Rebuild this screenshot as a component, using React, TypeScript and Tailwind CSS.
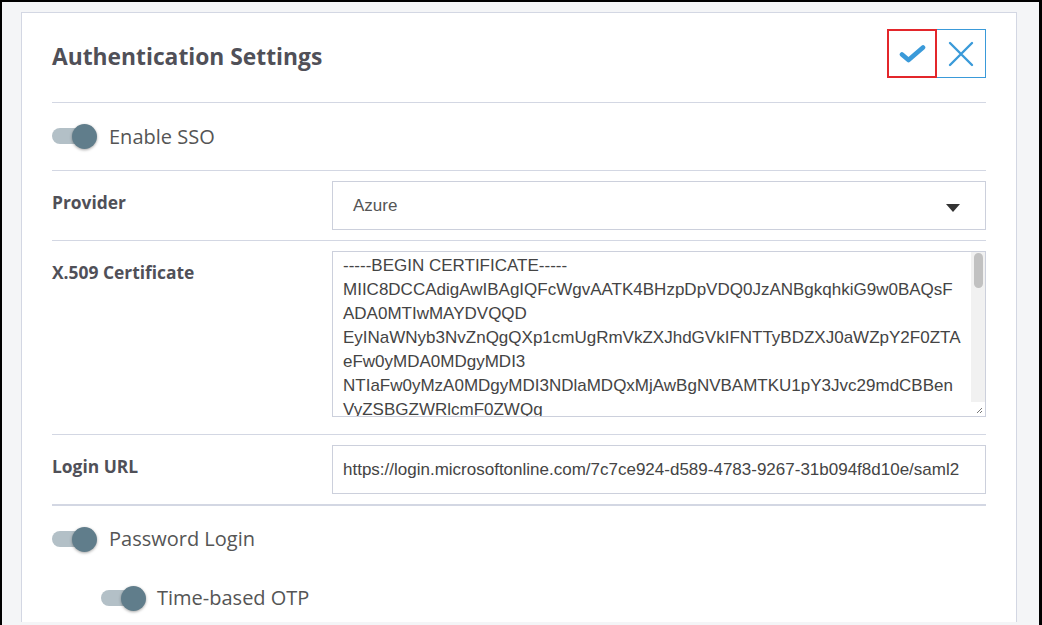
import React from "react";

const certLines = [
  "-----BEGIN CERTIFICATE-----",
  "MIIC8DCCAdigAwIBAgIQFcWgvAATK4BHzpDpVDQ0JzANBgkqhkiG9w0BAQsF",
  "ADA0MTIwMAYDVQQD",
  "EyINaWNyb3NvZnQgQXp1cmUgRmVkZXJhdGVkIFNTTyBDZXJ0aWZpY2F0ZTA",
  "eFw0yMDA0MDgyMDI3",
  "NTIaFw0yMzA0MDgyMDI3NDlaMDQxMjAwBgNVBAMTKU1pY3Jvc29mdCBBen",
  "VyZSBGZWRlcmF0ZWQg",
];

const Toggle = () => (
  <div className="relative h-[25px] w-[46px] shrink-0">
    <div className="absolute left-0 top-[4px] h-[16px] w-[38px] rounded-full bg-[#b3c0c7]" />
    <div className="absolute left-[20px] top-0 h-[25px] w-[25px] rounded-full bg-[#607d8b] shadow-[0_1px_3px_rgba(0,0,0,0.35)]" />
  </div>
);

const Label = ({ children }: { children: React.ReactNode }) => (
  <div className="w-[280px] shrink-0 pt-[9px] text-[17.4px] font-bold leading-6 text-[#505058]">
    {children}
  </div>
);

export default function App() {
  return (
    <div className="h-[625px] w-[1042px] overflow-hidden border-l-2 border-r-[3px] border-t-2 border-black bg-[#f4f5f7] pl-[19px] pt-[10px] font-['Open_Sans',sans-serif]">
      <div className="h-[610px] w-[996px] overflow-hidden border border-b-0 border-[#d3d7e3] bg-white px-[30px]">
        {/* header */}
        <div className="flex items-center justify-between border-b border-[#d3d7e3] pb-6 pt-4">
          <h1 className="mt-[8px] text-[22.8px] font-bold text-[#505058]">Authentication Settings</h1>
          <div className="flex">
            <button className="flex h-[49px] w-[50px] items-center justify-center border-2 border-[#e3262b]">
              <svg width="27" height="18" viewBox="0 0 27 18">
                <polyline
                  points="3,9.5 9.5,15 24,2.5"
                  fill="none"
                  stroke="#3a9ad9"
                  strokeWidth="4.6"
                  strokeLinecap="round"
                  strokeLinejoin="round"
                />
              </svg>
            </button>
            <button className="flex h-[49px] w-[49px] items-center justify-center border border-l-0 border-[#3a9ad9]">
              <svg width="26" height="26" viewBox="0 0 26 26">
                <path d="M2 2L24 24M24 2L2 24" stroke="#3a9ad9" strokeWidth="2.4" strokeLinecap="round" />
              </svg>
            </button>
          </div>
        </div>

        {/* enable sso */}
        <div className="flex h-[68px] items-center gap-[11px] border-b border-[#d3d7e3]">
          <Toggle />
          <span className="text-[20px] text-[#555]">Enable SSO</span>
        </div>

        {/* provider */}
        <div className="flex border-b border-[#d3d7e3] pb-[10px] pt-[10px]">
          <Label>Provider</Label>
          <div className="flex h-[49px] flex-1 items-center justify-between border border-[#ccd0dc] pl-5 pr-[25px] font-['Liberation_Sans',sans-serif] text-[17px] text-[#555]">
            <span>Azure</span>
            <svg className="mt-[4px]" width="14" height="8" viewBox="0 0 14 8">
              <path d="M0 0H14L7 8Z" fill="#333" />
            </svg>
          </div>
        </div>

        {/* certificate */}
        <div className="flex border-b border-[#d3d7e3] pb-[17px] pt-[10px]">
          <Label>X.509 Certificate</Label>
          <div className="relative flex h-[166px] flex-1 overflow-hidden border border-[#ccd0dc]">
            <div className="flex-1 overflow-hidden pl-[10px] pt-[2px] font-['Liberation_Sans',sans-serif] text-[17px] leading-6 text-[#444]">
              {certLines.map((l, i) => (
                <div key={i} className="whitespace-nowrap">
                  {l}
                </div>
              ))}
            </div>
            <div className="flex w-[14px] shrink-0 flex-col bg-[#f1f1f1]">
              <div className="mx-auto mt-px h-[35px] w-[9px] rounded-full bg-[#c1c1c1]" />
              <div className="flex-1" />
              <div className="relative h-[14px] bg-white">
                <svg className="absolute bottom-[2px] right-[2px]" width="7" height="7" viewBox="0 0 7 7">
                  <path d="M6 1L1 6M6 4L4 6" stroke="#777" strokeWidth="1" />
                </svg>
              </div>
            </div>
          </div>
        </div>

        {/* login url */}
        <div className="flex border-b-2 border-[#d3d7e3] pb-[10px] pt-[10px]">
          <Label>Login URL</Label>
          <div className="flex h-[49px] flex-1 items-center border border-[#ccd0dc] pl-[10px] font-['Liberation_Sans',sans-serif] text-[17px] text-[#444]">
            https://login.microsoftonline.com/7c7ce924-d589-4783-9267-31b094f8d10e/saml2
          </div>
        </div>

        {/* password login */}
        <div className="flex h-[66px] items-center gap-[11px]">
          <Toggle />
          <span className="text-[20px] text-[#555]">Password Login</span>
        </div>
        <div className="flex h-[52px] items-center gap-[10px] pl-[49px]">
          <Toggle />
          <span className="text-[20px] text-[#555]">Time-based OTP</span>
        </div>
      </div>
    </div>
  );
}
